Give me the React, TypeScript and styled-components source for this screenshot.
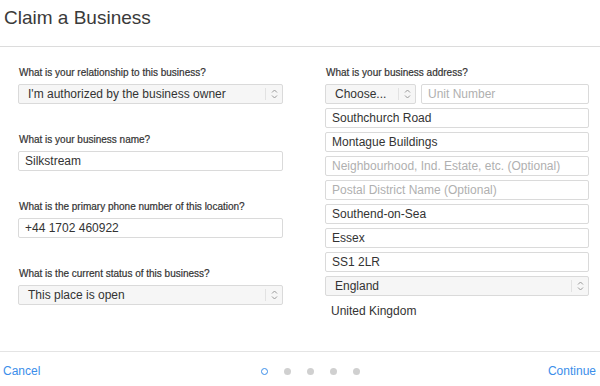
import React from "react";
import styled, { createGlobalStyle } from "styled-components";

const GlobalStyle = createGlobalStyle`
  html, body {
    margin: 0;
    padding: 0;
    background: #ffffff;
  }
  body {
    font-family: "Liberation Sans", Arial, sans-serif;
    color: #333;
  }
`;

interface SelectProps {
  value: string;
  width?: string;
}

function Select({ value, width }: SelectProps) {
  return (
    <SelectBox $width={width}>
      <SelectValue>{value}</SelectValue>
      <ArrowCell>
        <svg width="7" height="12" viewBox="0 0 7 12">
          <path
            d="M1 4.5 L3.5 2 L6 4.5 M1 7.5 L3.5 10 L6 7.5"
            fill="none"
            stroke="#9a9a9a"
            strokeWidth="1"
          />
        </svg>
      </ArrowCell>
    </SelectBox>
  );
}

function Field({ value, placeholder }: { value?: string; placeholder?: string }) {
  return <Input readOnly value={value ?? ""} placeholder={placeholder} />;
}

export default function App() {
  return (
    <Page>
      <GlobalStyle />
      <Header>
        <Title>Claim a Business</Title>
      </Header>
      <Main>
        <Column>
          <Group>
            <Label>What is your relationship to this business?</Label>
            <Select value="I'm authorized by the business owner" />
          </Group>
          <Group>
            <Label>What is your business name?</Label>
            <Field value="Silkstream" />
          </Group>
          <Group>
            <Label>What is the primary phone number of this location?</Label>
            <Field value="+44 1702 460922" />
          </Group>
          <Group>
            <Label>What is the current status of this business?</Label>
            <Select value="This place is open" />
          </Group>
        </Column>
        <Column>
          <Label>What is your business address?</Label>
          <AddressList>
            <Row>
              <Select value="Choose..." width="91px" />
              <Field placeholder="Unit Number" />
            </Row>
            <Field value="Southchurch Road" />
            <Field value="Montague Buildings" />
            <Field placeholder="Neighbourhood, Ind. Estate, etc. (Optional)" />
            <Field placeholder="Postal District Name (Optional)" />
            <Field value="Southend-on-Sea" />
            <Field value="Essex" />
            <Field value="SS1 2LR" />
            <Select value="England" />
            <Country>United Kingdom</Country>
          </AddressList>
        </Column>
      </Main>
      <Footer>
        <LinkButton>Cancel</LinkButton>
        <Dots>
          {[0, 1, 2, 3, 4].map((i) => (
            <Dot key={i} $active={i === 0} />
          ))}
        </Dots>
        <LinkButton $right>Continue</LinkButton>
      </Footer>
    </Page>
  );
}

const Page = styled.div`
  width: 600px;
  height: 386px;
  display: flex;
  flex-direction: column;
  overflow: hidden;
`;

const Header = styled.div`
  height: 46px;
  border-bottom: 1px solid #dcdcdc;
  padding-left: 4px;
  box-sizing: content-box;
`;

const Title = styled.h1`
  margin: 0;
  padding-top: 6px;
  font-size: 19px;
  line-height: 24px;
  font-weight: normal;
  color: #3a3a3a;
`;

const Main = styled.div`
  flex: 1;
  display: grid;
  grid-template-columns: 265px 264px;
  column-gap: 42px;
  padding: 20px 0 0 18px;
`;

const Column = styled.div`
  display: flex;
  flex-direction: column;
`;

const Group = styled.div`
  display: flex;
  flex-direction: column;
  margin-bottom: 30px;
`;

const Label = styled.div`
  font-size: 10px;
  line-height: 12px;
  color: #333;
  margin-bottom: 5px;
  padding-left: 1px;
  -webkit-text-stroke: 0.2px #333;
`;

const AddressList = styled.div`
  display: flex;
  flex-direction: column;
  gap: 4px;
`;

const Row = styled.div`
  display: flex;
  gap: 5px;
  & > input {
    flex: 1;
  }
`;

const Input = styled.input`
  all: unset;
  display: block;
  box-sizing: border-box;
  height: 20px;
  width: 100%;
  min-width: 0;
  border: 1px solid #dadada;
  border-radius: 2px;
  background: #fff;
  padding: 0 6px;
  font-family: "Liberation Sans", Arial, sans-serif;
  font-size: 12px;
  line-height: 18px;
  color: #333;
  &::placeholder {
    color: #b0b0b0;
  }
`;

const SelectBox = styled.div<{ $width?: string }>`
  box-sizing: border-box;
  display: flex;
  align-items: center;
  height: 20px;
  width: ${({ $width }) => $width ?? "100%"};
  flex-shrink: 0;
  border: 1px solid #dadada;
  border-radius: 2px;
  background: #f6f6f6;
`;

const SelectValue = styled.span`
  flex: 1;
  padding-left: 9px;
  font-size: 12px;
  color: #333;
  white-space: nowrap;
  overflow: hidden;
`;

const ArrowCell = styled.span`
  display: flex;
  align-items: center;
  justify-content: center;
  width: 16px;
  height: 12px;
  border-left: 1px solid #e2e2e2;
`;

const Country = styled.div`
  font-size: 12px;
  color: #333;
  padding: 4px 0 0 6px;
`;

const Footer = styled.div`
  height: 35px;
  border-top: 1px solid #e4e4e4;
  display: grid;
  grid-template-columns: 1fr auto 1fr;
  align-items: center;
  padding: 4px 4px 0 3px;
  box-sizing: border-box;
`;

const LinkButton = styled.span<{ $right?: boolean }>`
  font-size: 12px;
  color: #3b8eea;
  text-align: ${({ $right }) => ($right ? "right" : "left")};
`;

const Dots = styled.div`
  display: flex;
  gap: 16px;
  padding-left: 22px;
`;

const Dot = styled.span<{ $active: boolean }>`
  box-sizing: border-box;
  width: 7px;
  height: 7px;
  border-radius: 50%;
  background: ${({ $active }) => ($active ? "#fff" : "#d0d0d0")};
  border: ${({ $active }) => ($active ? "1.5px solid #3b8eea" : "none")};
`;
